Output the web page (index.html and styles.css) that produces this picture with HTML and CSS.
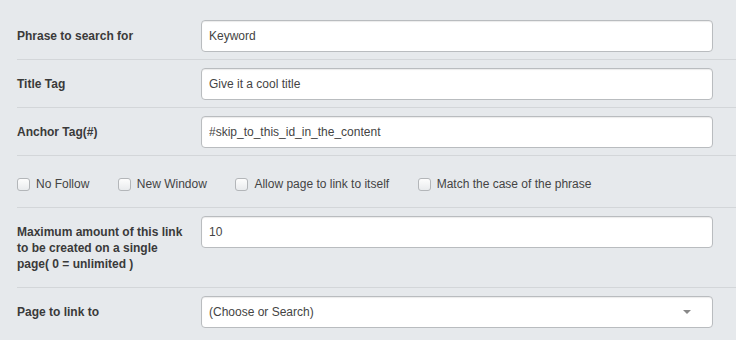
FILE: index.html
```html
<!DOCTYPE html>
<html lang="en">
<head>
    <meta charset="UTF-8">
    <meta name="viewport" content="width=device-width, initial-scale=1.0">
    <title>Link Settings</title>
    <link rel="stylesheet" href="styles.css">
</head>
<body>
    <!-- Link options form -->
    <div class="form">
        <div class="row first">
            <label class="label" for="phrase">Phrase to search for</label>
            <input class="field" type="text" id="phrase" value="Keyword">
        </div>
        <div class="row">
            <label class="label" for="title">Title Tag</label>
            <input class="field" type="text" id="title" value="Give it a cool title">
        </div>
        <div class="row">
            <label class="label" for="anchor">Anchor Tag(#)</label>
            <input class="field" type="text" id="anchor" value="#skip_to_this_id_in_the_content">
        </div>
        <div class="row checks">
            <label class="check"><span class="box"></span>No Follow</label>
            <label class="check"><span class="box"></span>New Window</label>
            <label class="check"><span class="box"></span>Allow page to link to itself</label>
            <label class="check"><span class="box"></span>Match the case of the phrase</label>
        </div>
        <div class="row tall">
            <label class="label" for="max">Maximum amount of this link to be created on a single page( 0 = unlimited )</label>
            <input class="field" type="text" id="max" value="10">
        </div>
        <div class="row">
            <label class="label">Page to link to</label>
            <div class="field select">
                <span>(Choose or Search)</span>
                <span class="caret"></span>
            </div>
        </div>
    </div>
</body>
</html>
```

FILE: styles.css
```css
body {
    margin: 0;
    padding: 0;
    background-color: #e6e9ec;
    font-family: "Liberation Sans", Arial, sans-serif;
    font-size: 12px;
    color: #333;
}

.form {
    padding: 12px 0 0 17px;
}

.row {
    display: grid;
    grid-template-columns: 184px 512px;
    align-items: start;
    padding: 8px 0 7px;
    border-top: 1px solid #d3d6d9;
}

.row.first {
    border-top: none;
}

.label {
    display: block;
    font-weight: bold;
    line-height: 16px;
    padding: 8px 14px 0 0;
    color: #3a3a3a;
}

.row.tall {
    padding-bottom: 15px;
}

.field {
    box-sizing: border-box;
    height: 32px;
    width: 512px;
    margin: 0;
    padding: 0 7px;
    border: 1px solid #b9bcbf;
    border-radius: 4px;
    background: #fff;
    box-shadow: inset 0 1px 1px rgba(0, 0, 0, 0.08);
    font-family: inherit;
    font-size: 12px;
    color: #444;
    outline: none;
}

.select {
    display: flex;
    align-items: center;
    justify-content: space-between;
    padding-right: 21px;
}

.caret {
    width: 0;
    height: 0;
    border-left: 4px solid transparent;
    border-right: 4px solid transparent;
    border-top: 4px solid #888;
}

.checks {
    display: flex;
    gap: 28.5px;
    padding: 20px 0 15px;
}

.check {
    display: flex;
    align-items: center;
    gap: 6px;
    line-height: 16px;
    color: #444;
}

.box {
    box-sizing: border-box;
    width: 13px;
    height: 13px;
    border: 1px solid #b3b6b9;
    border-radius: 3px;
    background: linear-gradient(#fdfdfd, #e9ebed);
}
```
